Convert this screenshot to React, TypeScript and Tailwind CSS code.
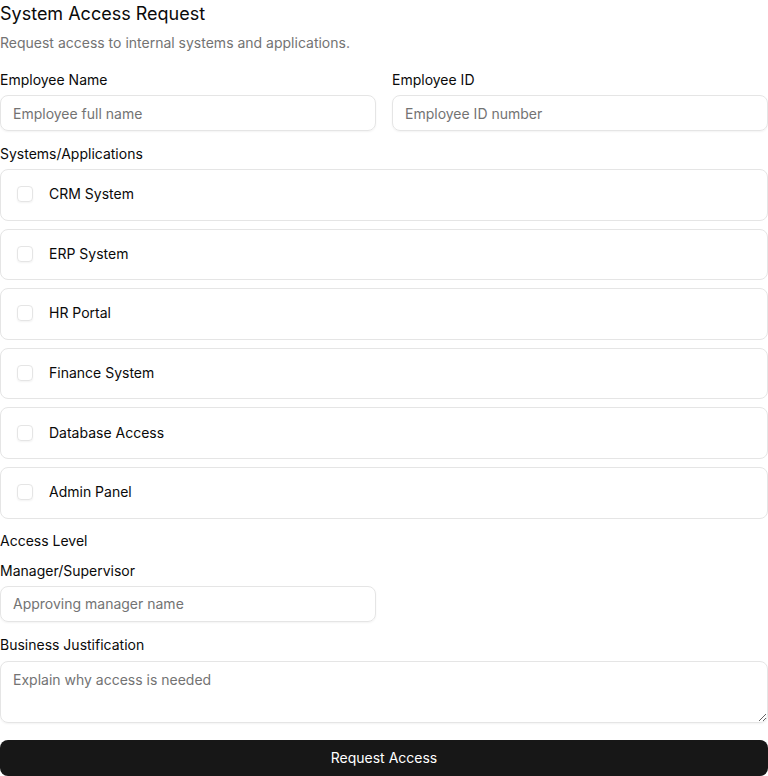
import React from "react";

const systems = [
  "CRM System",
  "ERP System",
  "HR Portal",
  "Finance System",
  "Database Access",
  "Admin Panel",
];

const inputCls =
  "h-9 w-full rounded-lg border border-[#e5e5e5] px-3 text-[14px] placeholder:text-[#737373] outline-none shadow-[0_1px_2px_rgba(0,0,0,0.05)]";

export default function App() {
  return (
    <div
      className="w-[768px] h-[776px] bg-white text-[#0a0a0a] overflow-hidden"
      style={{ fontFamily: 'Inter, "Liberation Sans", Arial, sans-serif' }}
    >
      <form className="flex flex-col" onSubmit={(e) => e.preventDefault()}>
        <h1 className="text-[18px] leading-[28px] font-normal">System Access Request</h1>
        <p className="mt-[5px] mb-px text-[14px] leading-[20px] text-[#737373]">
          Request access to internal systems and applications.
        </p>

        <div className="mt-4 grid grid-cols-2 gap-4">
          <div className="flex flex-col">
            <label className="text-[14px] leading-[20px]">Employee Name</label>
            <input className={"mt-[5px] " + inputCls} placeholder="Employee full name" />
          </div>
          <div className="flex flex-col">
            <label className="text-[14px] leading-[20px]">Employee ID</label>
            <input className={"mt-[5px] " + inputCls} placeholder="Employee ID number" />
          </div>
        </div>

        <label className="mt-[13px] text-[14px] leading-[20px]">Systems/Applications</label>
        <div className="mt-[5px] flex flex-col gap-2">
          {systems.map((s) => (
            <div
              key={s}
              className="flex h-[51.6px] items-center gap-4 rounded-lg border border-[#e5e5e5] px-4 pb-px"
            >
              <span className="h-4 w-4 shrink-0 rounded-[4px] border border-[#e5e5e5] shadow-[0_1px_2px_rgba(0,0,0,0.05)]" />
              <span className="text-[14px] leading-[20px]">{s}</span>
            </div>
          ))}
        </div>

        <label className="mt-[12.4px] text-[14px] leading-[20px]">Access Level</label>

        <label className="mt-[10px] text-[14px] leading-[20px]">Manager/Supervisor</label>
        <div className="mt-[5px] grid grid-cols-2 gap-4">
          <input className={inputCls} placeholder="Approving manager name" />
        </div>

        <label className="mt-[13px] text-[14px] leading-[20px]">Business Justification</label>
        <textarea
          className="mt-[6px] h-[62px] w-full rounded-lg border border-[#e5e5e5] px-3 py-2 text-[14px] leading-[20px] placeholder:text-[#737373] outline-none shadow-[0_1px_2px_rgba(0,0,0,0.05)]"
          placeholder="Explain why access is needed"
        />

        <button
          type="submit"
          className="mt-[17px] h-9 w-full rounded-lg bg-[#171717] text-[14px] text-white"
        >
          Request Access
        </button>
      </form>
    </div>
  );
}
